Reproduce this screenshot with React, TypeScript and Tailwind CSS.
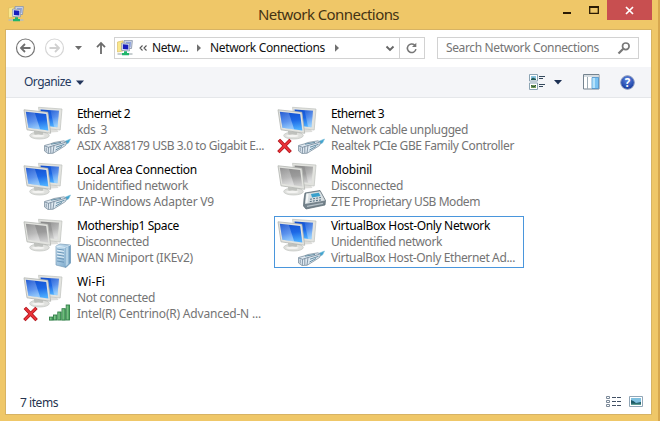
import { useLayoutEffect, useRef } from 'react';

type FitProps = { text: string; width: number; className?: string };

// Single-line label whose tracking is adjusted so that it fills a given width.
function Fit({ text, width, className = '' }: FitProps) {
  const ref = useRef<HTMLSpanElement>(null);
  useLayoutEffect(() => {
    const el = ref.current;
    if (!el) return;
    el.style.letterSpacing = '0px';
    const natural = el.getBoundingClientRect().width;
    el.style.letterSpacing = `${(width - natural) / text.length}px`;
  }, [text, width]);
  return (
    <span ref={ref} className={`inline-block shrink-0 whitespace-pre ${className}`}>
      {text}
    </span>
  );
}

type Overlay = 'cable' | 'server' | 'phone' | 'bars';
type Line = [string, number];
type Connection = { lines: [Line, Line, Line]; overlay: Overlay; off?: boolean; error?: boolean; selected?: boolean };

const left: Connection[] = [
  { lines: [['Ethernet 2', 53], ['kds  3', 30], ['ASIX AX88179 USB 3.0 to Gigabit E...', 187]], overlay: 'cable' },
  { lines: [['Local Area Connection', 120], ['Unidentified network', 111], ['TAP-Windows Adapter V9', 137]], overlay: 'cable' },
  { lines: [['Mothership1 Space', 102], ['Disconnected', 72], ['WAN Miniport (IKEv2)', 116]], overlay: 'server', off: true },
  { lines: [['Wi-Fi', 28], ['Not connected', 78], ['Intel(R) Centrino(R) Advanced-N ...', 184]], overlay: 'bars', error: true },
];

const right: Connection[] = [
  { lines: [['Ethernet 3', 53], ['Network cable unplugged', 137], ['Realtek PCIe GBE Family Controller', 183]], overlay: 'cable', error: true },
  { lines: [['Mobinil', 41], ['Disconnected', 72], ['ZTE Proprietary USB Modem', 149]], overlay: 'phone', off: true },
  { lines: [['VirtualBox Host-Only Network', 159], ['Unidentified network', 111], ['VirtualBox Host-Only Ethernet Ad...', 184]], overlay: 'cable', selected: true },
];

function Defs() {
  return (
    <svg className="absolute size-0" aria-hidden="true">
      <defs>
        <linearGradient id="on" x1=".3" y1="0" x2=".5" y2="1">
          <stop offset="0" stopColor="#1450cf" /><stop offset=".5" stopColor="#1c68e6" />
          <stop offset="1" stopColor="#4fb0ff" />
        </linearGradient>
        <linearGradient id="off" x1=".3" y1="0" x2=".5" y2="1">
          <stop offset="0" stopColor="#8b8b8b" /><stop offset=".5" stopColor="#9b9b9b" />
          <stop offset="1" stopColor="#cfcfcf" />
        </linearGradient>
        <linearGradient id="glare" x1="0" y1="0" x2=".6" y2="1">
          <stop offset="0" stopColor="#fff" stopOpacity=".08" /><stop offset="1" stopColor="#fff" stopOpacity=".42" />
        </linearGradient>
        <linearGradient id="bar" x1="0" y1="0" x2="1" y2="0">
          <stop offset="0" stopColor="#9ad8a0" /><stop offset="1" stopColor="#3b9a52" />
        </linearGradient>
        <linearGradient id="srv" x1="0" y1="0" x2="1" y2="1">
          <stop offset="0" stopColor="#cfe6f5" /><stop offset="1" stopColor="#6f9fc4" />
        </linearGradient>
        <radialGradient id="help" cx=".5" cy=".3" r=".7">
          <stop offset="0" stopColor="#5f87e2" /><stop offset="1" stopColor="#12379c" />
        </radialGradient>
      </defs>
    </svg>
  );
}

function Cable() {
  return (
    <g strokeLinejoin="round">
      <path d="M42 38.5 50.5 35 48.5 39 43 41.5Z" fill="#3fa3cf" stroke="#79bdd8" strokeWidth=".6" />
      <path d="M24.5 41.5 30 40 34 38.5 44 36.8 46.5 38.5 45.5 41.5 40 45 33 49.3 28 49.5 24.5 47Z" fill="#dfe9f1" stroke="#7d90a0" strokeWidth=".8" />
      <path d="M24.8 42 28.5 43.3 28.3 49.3M28.5 43.3 34 41.5 45.5 38.3M34 41.5 33 49M30.8 42.7V49" fill="none" stroke="#6d8294" strokeWidth=".8" />
      <path d="M36 43.2 44.5 40.3M35.5 46 42 42.5M31 40.2 41 38.4" fill="none" stroke="#55829b" strokeWidth=".9" />
      <path d="M26.2 43.5V47.5" stroke="#6d8294" strokeWidth=".8" />
    </g>
  );
}

function Server() {
  return (
    <g>
      <path d="M36 30 40 28 50.5 29V47L46 51.5 36 49Z" fill="url(#srv)" stroke="#7a9cb8" strokeWidth=".7" />
      <path d="M45 31.5 50.5 29V47L45 51.5Z" fill="#709dc0" />
      <path d="M45.5 32 48.5 30.5V48L45.5 50.5Z" fill="#b4d2e6" />
      <path d="M36 30 45 31.5 50.5 29" fill="none" stroke="#e9f4fb" strokeWidth=".7" />
      <path d="M37 33 44 34.2M37 36 44 37.2M37 39 44 40.2M37 42 44 43.2M37 45 44 46.2" stroke="#5a88ac" strokeWidth=".8" />
      <path d="M37 34.2 44 35.4M37 37.2 44 38.4M37 40.2 44 41.4" stroke="#f0f8fd" strokeWidth=".8" />
    </g>
  );
}

function Phone() {
  return (
    <g strokeLinejoin="round">
      <path d="M31 33 46 30.5 51.5 40.5 51 45 32 49 29.5 46 30 39Z" fill="#75838c" stroke="#56656f" strokeWidth=".7" />
      <path d="M32 33.5 46 31.3 51 40.5 31 44Z" fill="#d8dfe2" />
      <path d="M37 34 44.8 32.7 46.5 36 38 37.5Z" fill="#38a0cb" />
      <path d="M33.5 34.8 32.6 42" stroke="#f5f8f8" strokeWidth="2" strokeLinecap="round" />
      <path d="M36 39.3 47 37.5M35.8 41.6 48 39.7" stroke="#5d7686" strokeWidth="1.1" strokeDasharray="2 1.1" />
      <path d="M33 46.3 49 43.3" stroke="#b6c1c8" strokeWidth="1.2" />
    </g>
  );
}

function Bars() {
  const bars = [[30, 45.6, 3], [34, 43.5, 5], [38.3, 40.5, 8], [42.5, 37.2, 11.4], [46.7, 33.5, 15]];
  return (
    <g>
      {bars.map(([x, y, h]) => (
        <rect key={x} x={x - 0.5} y={y - 0.5} width="3.3" height={h} fill="url(#bar)" stroke="#2e7d45" strokeWidth=".9" />
      ))}
    </g>
  );
}

function ConnectionIcon({ overlay, off, error }: Connection) {
  const screen = off ? 'url(#off)' : 'url(#on)';
  return (
    <svg viewBox="0 0 56 52" className="h-[52px] w-14 shrink-0">
      <path d="M30 25 37 25.5 38.5 28 30 28.5Z" fill="#dededb" />
      <path d="M18.5 3.3 42 5 40.2 26 22 24Z" fill="#e2e3df" stroke="#bfc1bd" strokeWidth=".7" strokeLinejoin="round" />
      <path d="M20.5 5.5 39 6.8 37.4 23.2 22 21.5Z" fill={screen} />
      <path d="M30.5 6.2 39 6.8 37.4 23.2 34 22.8Z" fill="url(#glare)" />
      <ellipse cx="19.5" cy="31.5" rx="9.8" ry="3.5" fill="#dfe0dd" stroke="#bfc1bd" strokeWidth=".7" />
      <path d="M14 27 23 28V30.5Q18.5 32.5 14.3 30.5Z" fill="#bfc1bd" />
      <ellipse cx="18.3" cy="31.8" rx="6.3" ry="1.3" fill="#f4f4f2" />
      <path d="M4 5.8 27.8 8.3 30.7 29.3 7 25.8Z" fill="#e2e3df" stroke="#b3b5b1" strokeWidth=".8" strokeLinejoin="round" />
      <path d="M5.8 7.8 26.2 10 28.3 26.6 8.4 23.8Z" fill={screen} />
      <path d="M5.8 7.8 14.8 8.8 20.2 25.4 8.4 23.8Z" fill="url(#glare)" />
      {error && (
        <g strokeLinecap="square">
          <path d="M6 37 15.5 47M15.3 37 5.5 47" stroke="#a90f16" strokeWidth="3.3" />
          <path d="M6 37 15.5 47M15.3 37 5.5 47" stroke="#e93339" strokeWidth="2" />
        </g>
      )}
      {overlay === 'cable' && <Cable />}
      {overlay === 'server' && <Server />}
      {overlay === 'phone' && <Phone />}
      {overlay === 'bars' && <Bars />}
    </svg>
  );
}

function Tile(item: Connection) {
  return (
    <div className={`flex h-[52px] w-[250px] border ${item.selected ? 'border-[#4a96dc]' : 'border-transparent'}`}>
      <div className="-my-px -ml-px flex">
        <ConnectionIcon {...item} />
        <div className="flex flex-col pt-[2px] pl-px text-[12px] leading-4">
          {item.lines.map(([text, width], i) => (
            <Fit key={text} text={text} width={width} className={i ? 'self-start text-[#747474]' : 'self-start text-black'} />
          ))}
        </div>
      </div>
    </div>
  );
}

function NetworkIcon() {
  return (
    <svg viewBox="0 0 16 16" className="size-4 shrink-0">
      <path d="M.5 2 6 .8V11L.5 12Z" fill="#f9e78c" stroke="#d9b95a" strokeWidth=".6" />
      <path d="M7 .6H15.4L14.5 8.5H7Z" fill="#cfd8ea" stroke="#8791a6" strokeWidth=".8" />
      <path d="M9 2H14L13.5 7H9Z" fill="#8aa0dc" />
      <path d="M4.6 3 12.4 3.6V11L4.6 10.4Z" fill="#dfe6f4" stroke="#8791a6" strokeWidth=".7" />
      <path d="M5.9 4.3 11.3 4.7V9.6L5.9 9Z" fill="#171ebc" />
      <path d="M.5 14H15.5" stroke="#b4bec1" strokeWidth="1.5" />
      <path d="M7 11.3H10V13H12V15.2H5V13H7Z" fill="#20b56b" />
    </svg>
  );
}

function TitleBar() {
  return (
    <header className="flex h-[30px] shrink-0">
      <div className="w-[252px] shrink-0 pt-1.5 pl-0.5"><NetworkIcon /></div>
      <div className="w-[292px] shrink-0 pt-[3px] text-[15px] leading-[22px] text-[#443313]">
        <Fit text="Network Connections" width={141} />
      </div>
      <div className="flex h-5 shrink-0">
        <svg viewBox="0 0 57 20" className="h-5 w-[57px]">
          <path d="M13 12H21V14H13Z" fill="#2b1b04" />
          <path d="M39.7 7H48.3V13.3H39.7Z" fill="none" stroke="#2b1b04" strokeWidth="1.3" />
          <path d="M39 7H49" stroke="#2b1b04" strokeWidth="2" />
        </svg>
        <div className="h-5 w-[45px] bg-[#c84f50]">
          <svg viewBox="0 0 45 20" className="h-5 w-[45px]">
            <path d="m19 7 7 7m0-7-7 7" stroke="#fff" strokeWidth="1.7" />
          </svg>
        </div>
      </div>
    </header>
  );
}

function AddressRow() {
  return (
    <div className="flex h-[37px] shrink-0 pt-[7px]">
      <svg viewBox="0 0 108 22" className="h-[22px] w-[108px] shrink-0" fill="none">
        <circle cx="19.5" cy="11" r="9" stroke="#777" strokeWidth="1.2" />
        <path d="M24.5 11H15.5M19 7 15 11 19 15" stroke="#6f6f6f" strokeWidth="1.8" />
        <circle cx="48.5" cy="11" r="9" stroke="#d6d6d6" strokeWidth="1.2" />
        <path d="M43.5 11H52.5M49 7 53 11 49 15" stroke="#d0d0d0" strokeWidth="1.8" />
        <path d="M69 9H76L72.5 13Z" fill="#6d6d6d" />
        <path d="M95 17V6.5M91 10.2 95 6 99 10.2" stroke="#6b6b6b" strokeWidth="1.8" />
      </svg>
      <div className="flex h-[22px] w-[311px] items-center border border-[#d2d2d2] text-[12px] leading-5">
        <div className="w-[23px] pl-0.5"><NetworkIcon /></div>
        <svg viewBox="0 0 14 20" className="h-5 w-3.5" fill="none">
          <path d="M4.5 7.5 2 10 4.5 12.5M8.5 7.5 6 10 8.5 12.5" stroke="#555" strokeWidth="1.1" />
        </svg>
        <Fit text="Netw..." width={36} className="text-[#111]" />
        <svg viewBox="0 0 22 20" className="h-5 w-[22px]"><path d="M9 6.2 13 10 9 13.8Z" fill="#707070" /></svg>
        <Fit text="Network Connections" width={115} className="text-[#111]" />
        <svg viewBox="0 0 22 20" className="h-5 w-[22px]"><path d="M10 6.2 14 10 10 13.8Z" fill="#707070" /></svg>
        <div className="ml-auto flex">
          <svg viewBox="0 0 18 20" className="h-5 w-[18px]" fill="none">
            <path d="M5.5 8.5 9 12 12.5 8.5" stroke="#666" strokeWidth="1.9" />
          </svg>
          <svg viewBox="0 0 25 20" className="h-5 w-[25px] border-l border-[#d2d2d2]" fill="none">
            <path d="M15.3 7A4.5 4.5 0 1 0 16.6 11.2" stroke="#777" strokeWidth="1.6" />
            <path d="M12.5 9H17V4.5Z" fill="#777" />
          </svg>
        </div>
      </div>
      <div className="ml-3 flex h-[22px] w-[202px] items-center border border-[#d2d2d2] pl-2 text-[12px] leading-5">
        <Fit text="Search Network Connections" width={153} className="text-[#757575]" />
        <svg viewBox="0 0 16 16" className="ml-[17px] size-4" fill="none">
          <circle cx="9.8" cy="6.3" r="3.3" stroke="#777" strokeWidth="1.7" />
          <path d="M7.3 8.8 2.5 13.5" stroke="#777" strokeWidth="2.2" />
        </svg>
      </div>
    </div>
  );
}

function Toolbar() {
  return (
    <div className="flex h-[31px] shrink-0 items-center border-b border-[#e5e7ea] bg-[#f4f5f8] pl-[18px] text-[12px] leading-5 text-[#25395e]">
      <Fit text="Organize" width={47} />
      <svg viewBox="0 0 14 10" className="ml-0.5 h-2.5 w-3.5"><path d="M3 3.5H11L7 8Z" fill="#22355b" /></svg>
      <svg viewBox="0 0 36 18" className="ml-[441px] h-[18px] w-9" fill="none">
        <path d="M1.5 1.5H9.5V8H1.5ZM1.5 10H9.5V16.5H1.5Z" fill="#fff" stroke="#8ca4b4" />
        <path d="M3 3H8V6.5H3Z" fill="#8bc5e2" /><path d="M3 6 5 4.5 8 6V7H3Z" fill="#275e58" />
        <path d="M3 12H8V15H3Z" fill="#78a058" /><path d="M3 12.5 6 14 8 12" stroke="#264a3d" />
        <path d="M11 3.5H17M11 5.5H15M11 11.5H17M11 13.5H15" stroke="#33485c" />
        <path d="M26 7H34L30 11.5Z" fill="#1d3054" />
      </svg>
      <svg viewBox="0 0 17 16" className="ml-[19px] h-4 w-[17px]">
        <path d="M.5.5H16V15H.5Z" fill="#fff" stroke="#74838f" />
        <path d="M1 1H15.5V3H1Z" fill="#d5dce1" />
        <path d="M4.5 3V15" stroke="#9caab4" />
        <path d="M9 3.5H15.5V14.5H9Z" fill="#79c2f2" stroke="#4b8fc8" strokeWidth=".8" />
        <path d="M9.5 4H12V14H9.5Z" fill="#b5e2fb" />
      </svg>
      <div className="ml-5 flex size-[15px] items-center justify-center">
        <svg viewBox="0 0 15 15" className="size-[15px]">
          <circle cx="7.5" cy="7.5" r="6.8" fill="url(#help)" stroke="#8797bd" />
          <text x="7.5" y="11.6" textAnchor="middle" fontSize="11.5" fontWeight="700" fill="#fff">?</text>
        </svg>
      </div>
    </div>
  );
}

function StatusBar() {
  return (
    <footer className="flex h-[25px] shrink-0 items-center justify-between pr-[7px] pl-[14px] text-[12px] leading-5 text-[#26344f]">
      <Fit text="7 items" width={38} className="pt-0.5" />
      <svg viewBox="0 0 40 16" className="mt-px h-4 w-10" fill="none">
        <path d="M2.5 2.5H5.5V4.5H2.5ZM2.5 6.5H5.5V8.5H2.5ZM2.5 10.5H5.5V12.5H2.5Z" stroke="#7b8998" />
        <path d="M8 3.5H17M8 7.5H17M8 11.5H17" stroke="#415064" strokeDasharray="4 1" />
        <path d="M25.5 2.5H38.5V12.5H25.5Z" fill="#fff" stroke="#91a6b7" />
        <path d="M27 4H37V11H27Z" fill="#7fc0df" /><path d="M27 6Q30 7 32 9L37 8V11H27Z" fill="#1c5965" />
        <path d="M27 9.7H37V11H27Z" fill="#5b9c91" />
      </svg>
    </footer>
  );
}

export default function App() {
  return (
    <div className="h-[421px] w-[660px] overflow-hidden border-r-2 border-[#d7a84f] bg-[#efc768] pl-1.5 font-['Noto_Sans','Open_Sans',sans-serif]">
      <Defs />
      <TitleBar />
      <main className="flex h-[384px] w-[645px] flex-col bg-white shadow-[0_0_0_1px_#d7b364]">
        <AddressRow />
        <Toolbar />
        <div className="flex flex-1 gap-1 pt-[6px] pl-[14px]">
          {[left, right].map((column, i) => (
            <div key={i} className="flex flex-col gap-1">
              {column.map((item) => <Tile key={item.lines[0][0]} {...item} />)}
            </div>
          ))}
        </div>
        <StatusBar />
      </main>
    </div>
  );
}
